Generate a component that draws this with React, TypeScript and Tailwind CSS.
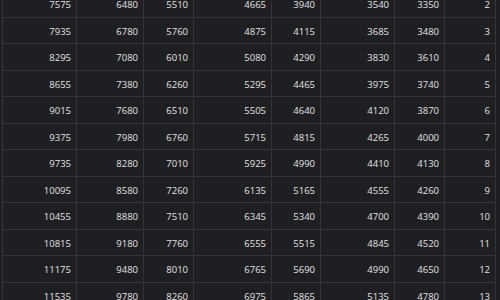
import React from "react";

const rows: number[][] = [
  [7575, 6480, 5510, 4665, 3940, 3540, 3350, 2],
  [7935, 6780, 5760, 4875, 4115, 3685, 3480, 3],
  [8295, 7080, 6010, 5080, 4290, 3830, 3610, 4],
  [8655, 7380, 6260, 5295, 4465, 3975, 3740, 5],
  [9015, 7680, 6510, 5505, 4640, 4120, 3870, 6],
  [9375, 7980, 6760, 5715, 4815, 4265, 4000, 7],
  [9735, 8280, 7010, 5925, 4990, 4410, 4130, 8],
  [10095, 8580, 7260, 6135, 5165, 4555, 4260, 9],
  [10455, 8880, 7510, 6345, 5340, 4700, 4390, 10],
  [10815, 9180, 7760, 6555, 5515, 4845, 4520, 11],
  [11175, 9480, 8010, 6765, 5690, 4990, 4650, 12],
  [11535, 9780, 8260, 6975, 5865, 5135, 4780, 13],
];

export default function App() {
  return (
    <div className="w-[500px] h-[300px] overflow-hidden bg-[#1e1f23] text-[#e2e2e2]" style={{ fontFamily: '"Open Sans", sans-serif' }}>
      <div className="ml-[2px] mt-[-9px] w-[494px] border-l border-[#333439]">
        {rows.map((r, i) => (
          <div key={i} className="grid grid-cols-[74px_67px_50px_78px_49px_74px_50px_51px] h-[26.5px] border-b border-[#333439]">
            {r.map((v, j) => (
              <div key={j} className="flex items-center justify-end pr-[5px] pt-[2px] border-r border-[#333439] text-[9.5px] leading-none">
                {v}
              </div>
            ))}
          </div>
        ))}
      </div>
    </div>
  );
}
